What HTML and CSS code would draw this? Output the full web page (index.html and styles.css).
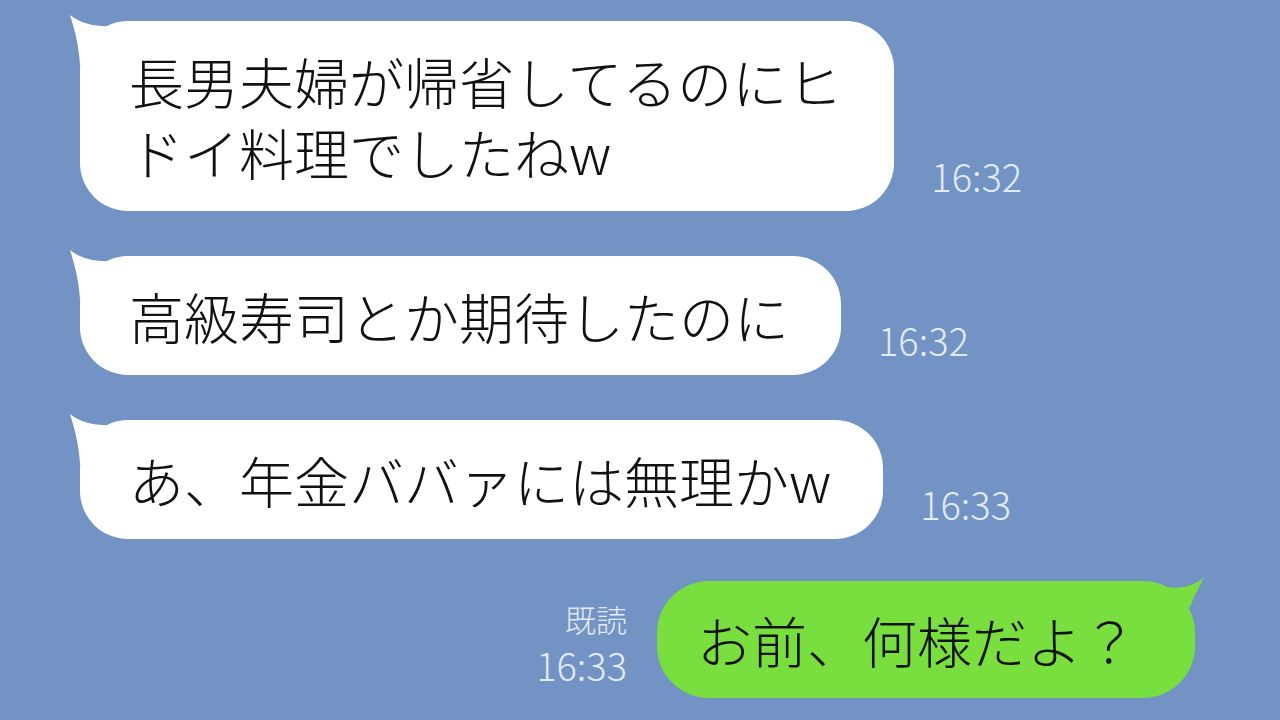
FILE: index.html
```html
<!DOCTYPE html>
<html lang="ja">
<head>
    <meta charset="UTF-8">
    <meta name="viewport" content="width=device-width, initial-scale=1.0">
    <title>トーク</title>
    <link rel="stylesheet" href="styles.css">
</head>
<body>

<div class="chat">
    <!-- 相手のメッセージ -->
    <div class="row left">
        <div class="bubble white">
            <svg class="tail tail-left" width="50" height="52" viewBox="0 0 50 52"><path d="M2 2 C7 18 11 33 12 52 L45 52 L45 13 C28 14 13 11 2 2 Z"/></svg>
            <p>長男夫婦が帰省してるのにヒ<br>ドイ料理でしたねw</p>
        </div>
        <span class="time">16:32</span>
    </div>

    <div class="row left">
        <div class="bubble white">
            <svg class="tail tail-left" width="50" height="52" viewBox="0 0 50 52"><path d="M2 2 C7 18 11 33 12 52 L45 52 L45 13 C28 14 13 11 2 2 Z"/></svg>
            <p>高級寿司とか期待したのに</p>
        </div>
        <span class="time">16:32</span>
    </div>

    <div class="row left">
        <div class="bubble white">
            <svg class="tail tail-left" width="50" height="52" viewBox="0 0 50 52"><path d="M2 2 C7 18 11 33 12 52 L45 52 L45 13 C28 14 13 11 2 2 Z"/></svg>
            <p>あ、年金ババァには無理かw</p>
        </div>
        <span class="time">16:33</span>
    </div>

    <!-- 自分のメッセージ -->
    <div class="row right">
        <div class="meta">
            <span class="read">既読</span>
            <span class="time">16:33</span>
        </div>
        <div class="bubble green">
            <svg class="tail tail-right" width="40" height="40" viewBox="0 0 40 40"><path d="M36 2 C31 12 27 20 22 32 L0 40 L0 12 C12 14 25 12 36 2 Z"/></svg>
            <p>お前、何様だよ？</p>
        </div>
    </div>
</div>

</body>
</html>
```

FILE: styles.css
```css
html, body {
    margin: 0;
    padding: 0;
}
body {
    width: 1280px;
    height: 720px;
    overflow: hidden;
    background-color: #7293c4;
    font-family: "Noto Sans CJK JP", "Noto Sans", sans-serif;
    font-weight: 300;
}
.chat {
    display: flex;
    flex-direction: column;
    gap: 45px;
    padding-top: 21px;
}
.row {
    display: flex;
    align-items: flex-end;
}
.row.left {
    padding-left: 80px;
}
.row.right {
    justify-content: flex-end;
    padding-right: 85px;
    margin-top: -3px;
}
.bubble {
    position: relative;
    border-radius: 48px;
    padding: 24px 52px 24px 49px;
}
.bubble p {
    position: relative;
    margin: 0;
    font-size: 55px;
    line-height: 71px;
    color: #111;
    white-space: nowrap;
}
.white {
    background-color: #ffffff;
}
.white .tail path {
    fill: #ffffff;
}
.green {
    background-color: #79df3e;
    border-radius: 52px;
    padding: 23px 58px 23px 40px;
}
.green .tail path {
    fill: #79df3e;
}
.tail {
    position: absolute;
    display: block;
}
.tail-left {
    left: -12px;
    top: -8px;
}
.tail-right {
    right: -13px;
    top: -6px;
}
.time {
    color: #e3ebf7;
    font-size: 38px;
    line-height: 1;
    white-space: nowrap;
}
.left .time {
    margin-left: 37px;
    margin-bottom: 16px;
}
.meta {
    display: flex;
    flex-direction: column;
    align-items: flex-end;
    margin-right: 30px;
    margin-bottom: 14px;
}
.read {
    color: #e3ebf7;
    font-size: 31px;
    line-height: 1;
    margin-bottom: 12px;
}
```
